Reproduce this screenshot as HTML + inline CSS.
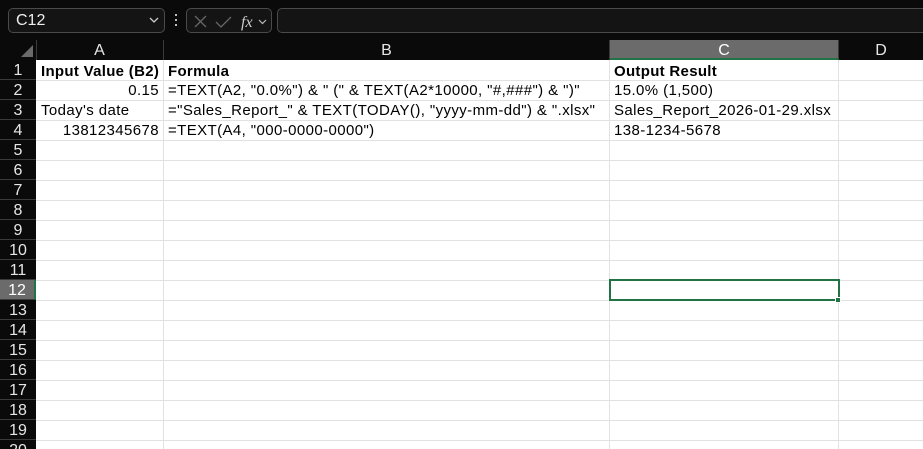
<!DOCTYPE html>
<html><head><style>
*{margin:0;padding:0;box-sizing:border-box}
html,body{width:923px;height:449px;overflow:hidden}
body{background:#0a0a0a;font-family:"Liberation Sans",sans-serif;position:relative}
.box{position:absolute;border:1px solid #4a4a4a;border-radius:5px;background:#141414}
.g{position:absolute;background:#fff;left:36px;top:60px;width:887px;height:389px}
.h{position:absolute;height:1px;background:#e1e1e1;left:36px;width:887px}
.v{position:absolute;width:1px;background:#e1e1e1;top:60px;height:389px}
.rh{position:absolute;left:0;width:36px;height:20px;color:#e6e6e6;font-size:16px;text-align:center;line-height:21px;border-bottom:1px solid #3a3a3a;background:#0a0a0a}
.ch{position:absolute;top:40px;height:20px;color:#e6e6e6;font-size:16px;text-align:center;line-height:21px;border-right:1px solid #3a3a3a}
.c{position:absolute;font-size:15px;letter-spacing:0.4px;line-height:21px;color:#000;white-space:nowrap;padding:0 4px 0 5px}
.r{text-align:right}
b{font-weight:bold;letter-spacing:0.3px}
</style></head><body>
<div class="box" style="left:8px;top:8px;width:157px;height:25px;color:#eee;font-size:16px;line-height:23px;padding-left:7px">C12<svg style="position:absolute;right:5px;top:8px" width="10" height="7"><path d="M1 1L5 5L9 1" stroke="#ccc" fill="none" stroke-width="1.3"/></svg></div>
<div style="position:absolute;left:175px;top:14px;width:2px;height:13px;background:repeating-linear-gradient(#bbb 0 2px,transparent 2px 5px)"></div>
<div class="box" style="left:186px;top:8px;width:86px;height:25px">
<svg width="86" height="25" style="position:absolute;left:0;top:0"><path d="M8 7L19 18M19 7L8 18" stroke="#666" stroke-width="1.3"/><path d="M29 13L34 18L44 8" stroke="#666" stroke-width="1.3" fill="none"/><text x="54" y="18" fill="#ccc" font-family="Liberation Serif" font-style="italic" font-size="16">fx</text><path d="M72 11L75.5 14.5L79 11" stroke="#bbb" fill="none" stroke-width="1.2"/></svg></div>
<div class="box" style="left:277px;top:8px;width:660px;height:25px"></div>
<svg style="position:absolute;left:20px;top:44px" width="14" height="14"><path d="M13 1L13 13L1 13Z" fill="#6a6a6a"/></svg>
<div class="ch" style="left:36px;width:128px">A</div>
<div class="ch" style="left:164px;width:446px">B</div>
<div class="ch" style="left:610px;width:229px;background:#6b6b6b;border-bottom:2px solid #217346;color:#fff">C</div>
<div class="ch" style="left:839px;width:84px;border-right:none">D</div>
<div style="position:absolute;left:36px;top:40px;width:1px;height:20px;background:#3a3a3a"></div>
<div class="g"></div>
<div class="v" style="left:163px"></div><div class="v" style="left:609px"></div><div class="v" style="left:838px"></div>
<div class="h" style="top:80px"></div><div class="h" style="top:100px"></div><div class="h" style="top:120px"></div><div class="h" style="top:140px"></div><div class="h" style="top:160px"></div><div class="h" style="top:180px"></div><div class="h" style="top:200px"></div><div class="h" style="top:220px"></div><div class="h" style="top:240px"></div><div class="h" style="top:260px"></div><div class="h" style="top:280px"></div><div class="h" style="top:300px"></div><div class="h" style="top:320px"></div><div class="h" style="top:340px"></div><div class="h" style="top:360px"></div><div class="h" style="top:380px"></div><div class="h" style="top:400px"></div><div class="h" style="top:420px"></div><div class="h" style="top:440px"></div>
<div class="rh" style="top:60px">1</div><div class="rh" style="top:80px">2</div><div class="rh" style="top:100px">3</div><div class="rh" style="top:120px">4</div><div class="rh" style="top:140px">5</div><div class="rh" style="top:160px">6</div><div class="rh" style="top:180px">7</div><div class="rh" style="top:200px">8</div><div class="rh" style="top:220px">9</div><div class="rh" style="top:240px">10</div><div class="rh" style="top:260px">11</div><div class="rh" style="top:280px;background:#6b6b6b;color:#fff;border-right:2px solid #217346">12</div><div class="rh" style="top:300px">13</div><div class="rh" style="top:320px">14</div><div class="rh" style="top:340px">15</div><div class="rh" style="top:360px">16</div><div class="rh" style="top:380px">17</div><div class="rh" style="top:400px">18</div><div class="rh" style="top:420px">19</div><div class="rh" style="top:440px">20</div>
<div class="c" style="left:36px;top:61px"><b>Input Value (B2)</b></div>
<div class="c" style="left:163px;top:61px"><b>Formula</b></div>
<div class="c" style="left:609px;top:61px"><b>Output Result</b></div>
<div class="c r" style="left:36px;width:127px;top:80px">0.15</div>
<div class="c" style="left:163px;top:80px">=TEXT(A2, "0.0%") &amp; " (" &amp; TEXT(A2*10000, "#,###") &amp; ")"</div>
<div class="c" style="left:609px;top:80px">15.0% (1,500)</div>
<div class="c" style="left:36px;top:100px">Today's date</div>
<div class="c" style="left:163px;top:100px">="Sales_Report_" &amp; TEXT(TODAY(), "yyyy-mm-dd") &amp; ".xlsx"</div>
<div class="c" style="left:609px;top:100px">Sales_Report_2026-01-29.xlsx</div>
<div class="c r" style="left:36px;width:127px;top:120px">13812345678</div>
<div class="c" style="left:163px;top:120px">=TEXT(A4, "000-0000-0000")</div>
<div class="c" style="left:609px;top:120px">138-1234-5678</div>
<div style="position:absolute;left:609px;top:279px;width:231px;height:22px;border:2px solid #217346"></div>
<div style="position:absolute;left:835px;top:297px;width:6px;height:6px;background:#217346;border:1px solid #fff"></div>
</body></html>
